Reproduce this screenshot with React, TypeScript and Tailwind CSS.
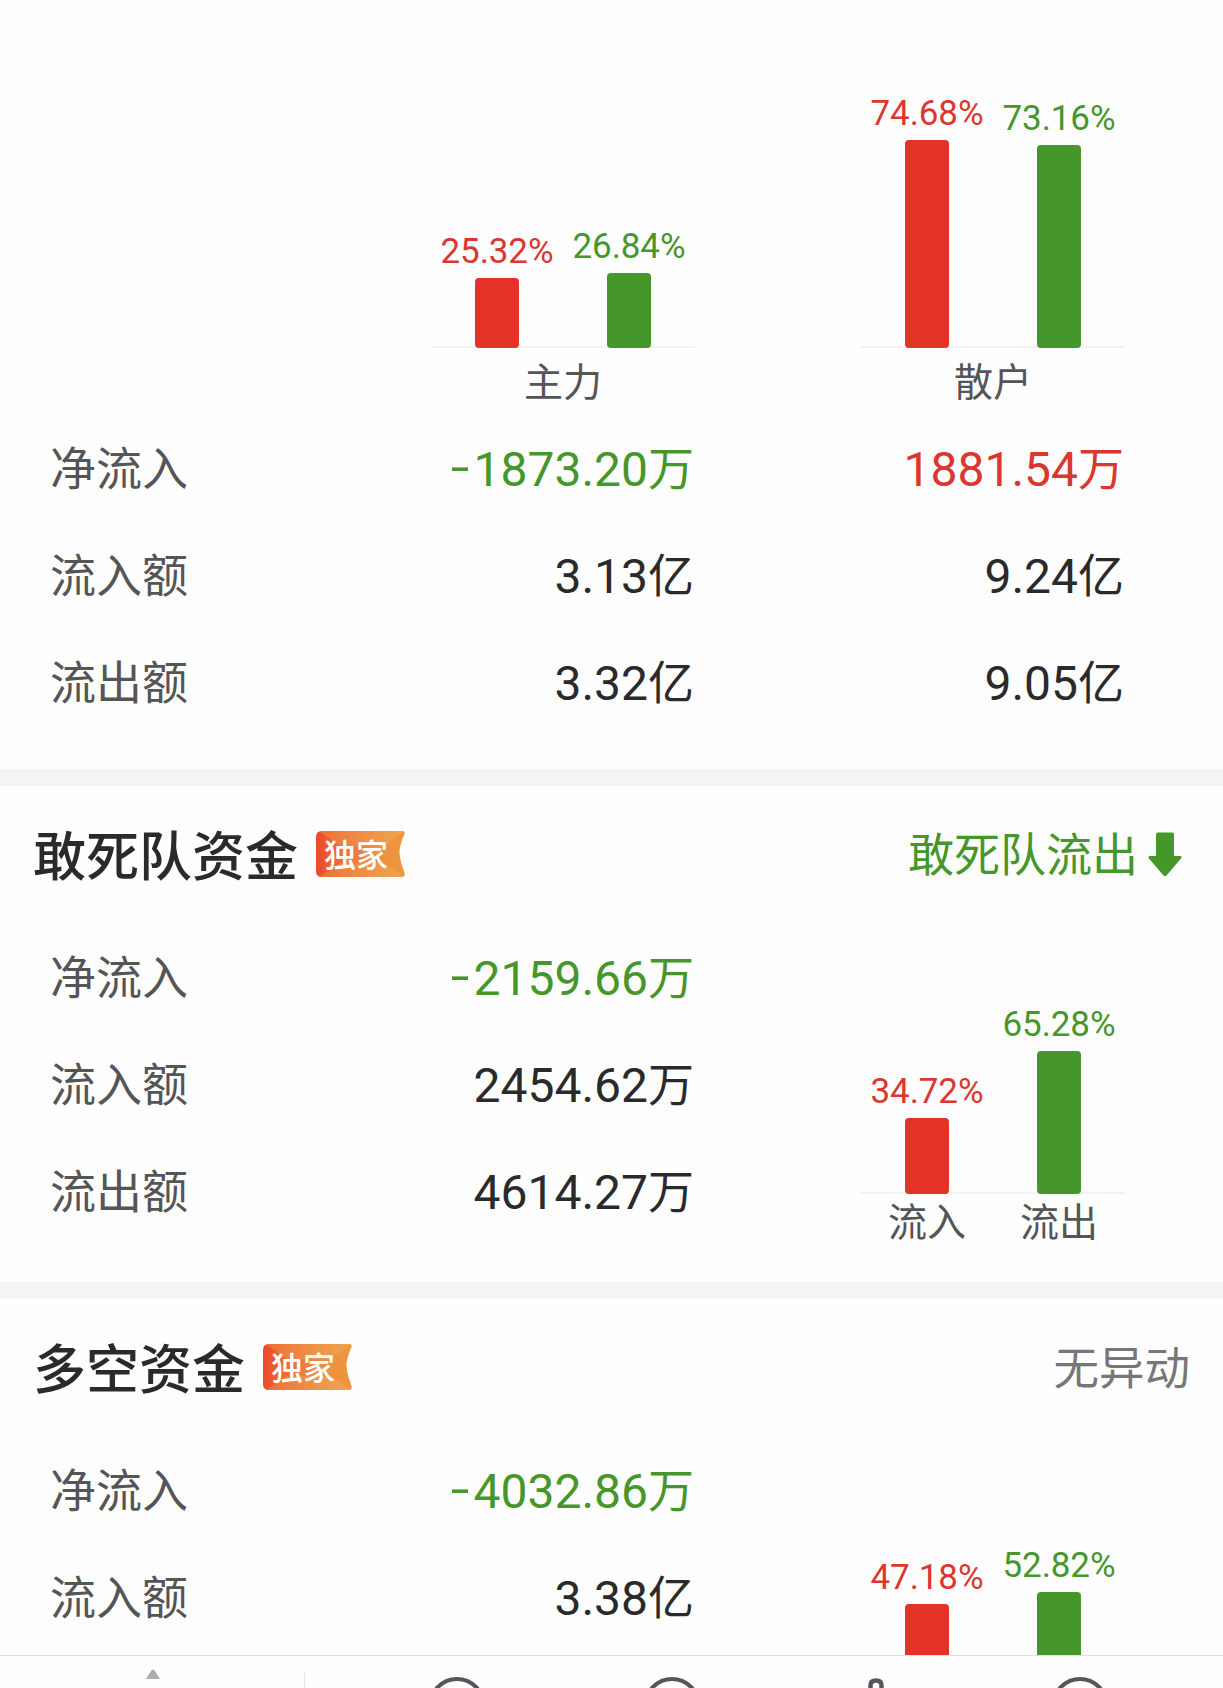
import React from "react";

type Bar = { value: number; tone: "red" | "green" };

const CJK = "font-['Noto_Sans_CJK_SC',sans-serif]";

function Amount({ value, unit, tone }: { value: string; unit: string; tone?: "red" | "green" }) {
  const color = tone === "red" ? "text-[#d9372f]" : tone === "green" ? "text-[#46962b]" : "text-[#2a2a2b]";
  const negative = value.startsWith("-");
  return (
    <div className={`flex h-[107px] w-[264px] items-center justify-end pr-px whitespace-nowrap ${color}`}>
      <span className="pt-[2px] font-[Roboto,sans-serif] text-[48px] leading-[60px]">
        {negative && <span className="relative -top-[2px] mr-[4px] inline-block origin-right scale-x-[1.4]">-</span>}
        {negative ? value.slice(1) : value}
      </span>
      <span className="pb-[8px] font-['Noto_Sans_CJK_SC',sans-serif] text-[46px] leading-[60px]">{unit}</span>
    </div>
  );
}

function Label({ children }: { children: React.ReactNode }) {
  return (
    <div className={`flex h-[107px] w-[381px] items-center pb-[7px] text-[46px] text-[#555556] ${CJK}`}>{children}</div>
  );
}

function BarChart({ bars, scale }: { bars: Bar[]; scale: number }) {
  return (
    <div className="relative flex w-[264px] items-end">
      <div className="absolute inset-x-0 bottom-0 h-[2px] bg-[#f2f2f2]" />
      {bars.map((b) => (
        <div key={b.tone} className="relative flex w-[132px] flex-col items-center">
          <span
            className={`font-[Roboto,sans-serif] text-[35px] leading-[41px] tracking-[-0.1px] ${b.tone === "red" ? "text-[#d9372f]" : "text-[#46962b]"}`}
          >
            {b.value.toFixed(2)}%
          </span>
          <div
            className={`mt-[6px] w-[44px] rounded-[4px] ${b.tone === "red" ? "bg-[#e33228]" : "bg-[#45972b]"}`}
            style={{ height: b.value * scale }}
          />
        </div>
      ))}
    </div>
  );
}

function Caption({ children, wide }: { children: React.ReactNode; wide?: boolean }) {
  return (
    <div className={`${wide ? "w-[264px]" : "w-[132px]"} text-center text-[39px] leading-[58px] text-[#555556] ${CJK}`}>
      {children}
    </div>
  );
}

function ExclusiveBadge() {
  return (
    <div className="relative mb-[2px] ml-[18px] flex h-[46px] w-[89px] items-center">
      <svg className="absolute inset-0" width="89" height="46" viewBox="0 0 89 46">
        <defs>
          <linearGradient id="ribbon" x1="0" x2="1" y1="0" y2="0">
            <stop offset="0" stopColor="#ea4a2c" />
            <stop offset="0.3" stopColor="#ec7239" />
            <stop offset="0.7" stopColor="#ed9142" />
            <stop offset="1" stopColor="#ee963c" />
          </linearGradient>
          <linearGradient id="fold" x1="0" x2="1" y1="0" y2="0">
            <stop offset="0" stopColor="#ee7a3c" />
            <stop offset="1" stopColor="#f0aa56" />
          </linearGradient>
          <clipPath id="ribbonShape">
            <path d="M6 0H86.500Q89.500 0 88.500 3Q83.500 14 83.500 21.500Q84 30 88.500 42Q89.500 46 86 46H6Q0 46 0 40V6Q0 0 6 0Z" />
          </clipPath>
        </defs>
        <g clipPath="url(#ribbonShape)">
          <rect width="89" height="46" fill="url(#ribbon)" />
          <path d="M3 0H89L67 15H24Z" fill="url(#fold)" opacity="0.7" />
          <path d="M3 46H89L68 32H24Z" fill="url(#fold)" opacity="0.7" />
        </g>
      </svg>
      <span className={`relative mb-[2px] ml-[8px] text-[32px] leading-[46px] font-medium text-white ${CJK}`}>独家</span>
    </div>
  );
}

function DownArrow() {
  return (
    <svg className="mb-[2px] ml-[10px]" width="34" height="45" viewBox="0 0 34 45">
      <path
        d="M10 0.500H24Q26 0.500 26 2.500V24H32Q34.500 24 33 26.500L18.500 43.500Q17 45 15.500 43.500L1 26.500Q-0.500 24 2 24H8V2.500Q8 0.500 10 0.500Z"
        fill="#45972b"
      />
    </svg>
  );
}

function SectionHeader({ title, children }: { title: string; children: React.ReactNode }) {
  return (
    <div className={`flex h-[138px] items-center px-[33px] ${CJK}`}>
      <h2 className="pb-[5px] text-[53px] leading-[72px] font-medium text-[#2a2a2b]">{title}</h2>
      <ExclusiveBadge />
      <div className="ml-auto flex items-center text-[46px] leading-[60px]">{children}</div>
    </div>
  );
}

function Divider() {
  return <div className="h-[17px] bg-[#f4f4f4]" />;
}

type FundProps = {
  title: string;
  status: React.ReactNode;
  rows: [string, string, string][];
  bars: Bar[];
  captions?: string[];
};

function FundSection({ title, status, rows, bars, captions = [] }: FundProps) {
  return (
    <section className="h-[496px]">
      <SectionHeader title={title}>{status}</SectionHeader>
      <div className="flex pl-[50px]">
        <div>
          {rows.map(([label, value, unit]) => (
            <div key={label} className="flex">
              <Label>{label}</Label>
              <Amount value={value} unit={unit} tone={value.startsWith("-") ? "green" : undefined} />
            </div>
          ))}
        </div>
        <div className="ml-[166px] flex h-[328px] flex-col justify-end">
          <BarChart bars={bars} scale={2.184} />
          <div className="-mt-[4px] flex h-[62px]">
            {captions.map((c) => (
              <Caption key={c}>{c}</Caption>
            ))}
          </div>
        </div>
      </div>
    </section>
  );
}

function BottomBar() {
  return (
    <nav className="relative h-[33px] overflow-hidden border-t border-[#e0e0e0] bg-[#fefefe]">
      <svg width="1223" height="32" viewBox="0 0 1223 32" fill="none" stroke="#55555c" strokeWidth="4">
        <path d="M153 13.500Q154 13.500 155 15L160 23H146L151 15Q152 13.500 153 13.500Z" fill="#adadad" stroke="none" />
        <path d="M304.500 17V32" stroke="#e4e4e4" strokeWidth="1" />
        <circle cx="457" cy="49.500" r="26.500" />
        <circle cx="672" cy="49.500" r="26.500" />
        <path d="M870.500 36V29.500Q870.500 24.500 876 24.500Q881.500 24.500 881.500 29.500V36" strokeWidth="4.500" />
        <circle cx="1080" cy="49.500" r="26.500" />
      </svg>
    </nav>
  );
}

const overview: [string, [string, string], [string, string]][] = [
  ["净流入", ["-1873.20", "万"], ["1881.54", "万"]],
  ["流入额", ["3.13", "亿"], ["9.24", "亿"]],
  ["流出额", ["3.32", "亿"], ["9.05", "亿"]],
];

export default function App() {
  return (
    <div className="flex h-[1688px] w-[1223px] flex-col overflow-hidden bg-[#fefefe]">
      <main className="h-[1655px] overflow-hidden">
        <section className="h-[769px]">
          <div className="flex h-[348px] items-end gap-[166px] pl-[431px]">
            <BarChart scale={2.78} bars={[{ value: 25.32, tone: "red" }, { value: 26.84, tone: "green" }]} />
            <BarChart scale={2.78} bars={[{ value: 74.68, tone: "red" }, { value: 73.16, tone: "green" }]} />
          </div>
          <div className="flex h-[67px] items-start gap-[166px] pt-[2px] pl-[431px]">
            <Caption wide>主力</Caption>
            <Caption wide>散户</Caption>
          </div>
          {overview.map(([label, main, retail], i) => (
            <div key={label} className="flex pl-[50px]">
              <Label>{label}</Label>
              <Amount value={main[0]} unit={main[1]} tone={i === 0 ? "green" : undefined} />
              <div className="w-[166px]" />
              <Amount value={retail[0]} unit={retail[1]} tone={i === 0 ? "red" : undefined} />
            </div>
          ))}
        </section>
        <Divider />
        <FundSection
          title="敢死队资金"
          status={
            <div className="mr-[8px] flex items-center text-[#46962b]">
              <span className="pb-[8px]">敢死队流出</span>
              <DownArrow />
            </div>
          }
          rows={[
            ["净流入", "-2159.66", "万"],
            ["流入额", "2454.62", "万"],
            ["流出额", "4614.27", "万"],
          ]}
          bars={[{ value: 34.72, tone: "red" }, { value: 65.28, tone: "green" }]}
          captions={["流入", "流出"]}
        />
        <Divider />
        <FundSection
          title="多空资金"
          status={<span className="pb-[7px] text-[45.5px] text-[#777777]">无异动</span>}
          rows={[
            ["净流入", "-4032.86", "万"],
            ["流入额", "3.38", "亿"],
          ]}
          bars={[{ value: 47.18, tone: "red" }, { value: 52.82, tone: "green" }]}
        />
      </main>
      <BottomBar />
    </div>
  );
}
